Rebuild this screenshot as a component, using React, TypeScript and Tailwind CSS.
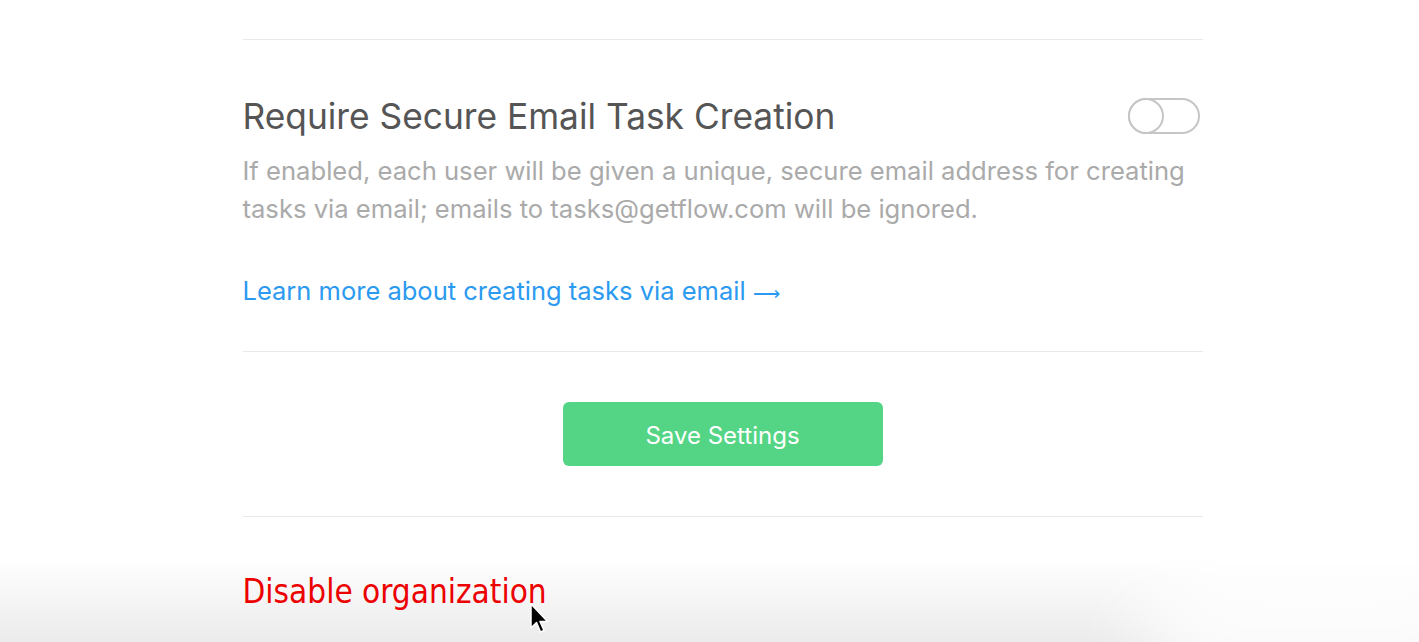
export default function App() {
  return (
    <div className="relative h-[642px] w-full overflow-hidden bg-white font-['Inter',sans-serif]">
      {/* bottom window shade */}
      <div className="pointer-events-none absolute inset-x-0 bottom-0 h-[84px] bg-gradient-to-b from-white/0 to-[#ebebeb]" />
      <div className="pointer-events-none absolute right-[-80px] bottom-[-60px] h-[160px] w-[360px] rounded-full bg-white/80 blur-2xl" />

      <div className="relative mx-auto w-[986px] pl-[26px] pt-[39px]">
        {/* Secure email setting */}
        <div className="border-t border-[#e9e9e9] pt-[55px] pb-[41px]">
          <div className="flex items-start justify-between">
            <h2 className="text-[35.3px] leading-[44px] font-normal text-[#555555]">
              Require Secure Email Task Creation
            </h2>
            <button
              type="button"
              aria-label="Require secure email task creation"
              className="mt-[3px] mr-[3px] flex h-[36px] w-[72px] items-center rounded-full border-2 border-[#c6c6c6] bg-white"
            >
              <span className="-ml-[2px] h-[36px] w-[36px] rounded-full border-2 border-[#c6c6c6] bg-white" />
            </button>
          </div>
          <p className="mt-[13px] text-[25.6px] leading-[38px] text-[#aaaaaa]">
            If enabled, each user will be given a unique, secure email address for creating tasks via email; emails to tasks@getflow.com will be ignored.
          </p>
          <a href="#" className="mt-[44px] block h-[38px] text-[25.5px] leading-[38px] text-[#2b9af0]">
            Learn more about creating tasks via email{" "}
            <span className="font-['DejaVu_Sans',sans-serif] text-[19px] leading-none font-light">⟶</span>
          </a>
        </div>

        {/* Save */}
        <div className="flex justify-center border-t border-[#e9e9e9] pt-[50px] pb-[50px]">
          <button
            type="button"
            className="h-[64px] w-[320px] rounded-[6px] bg-[#53d585] pt-[3px] text-[24px] text-white"
          >
            Save Settings
          </button>
        </div>

        {/* Danger zone */}
        <div className="border-t border-[#e9e9e9] pt-[53px]">
          <a href="#" className="block font-['DejaVu_Sans_Condensed','DejaVu_Sans',sans-serif] text-[33px] leading-[44px] text-[#ec0000]">
            Disable organization
          </a>
        </div>
      </div>

      {/* cursor */}
      <svg className="pointer-events-none absolute left-[530px] top-[603px]" width="22" height="34" viewBox="0 0 22 34">
        <path d="M1 1 L1 25 L6.5 19.5 L10.5 29 L14 27.5 L10 18.5 L17.5 18.5 Z" fill="#000" stroke="#fff" strokeWidth="1.5" strokeLinejoin="round" />
      </svg>
    </div>
  );
}
